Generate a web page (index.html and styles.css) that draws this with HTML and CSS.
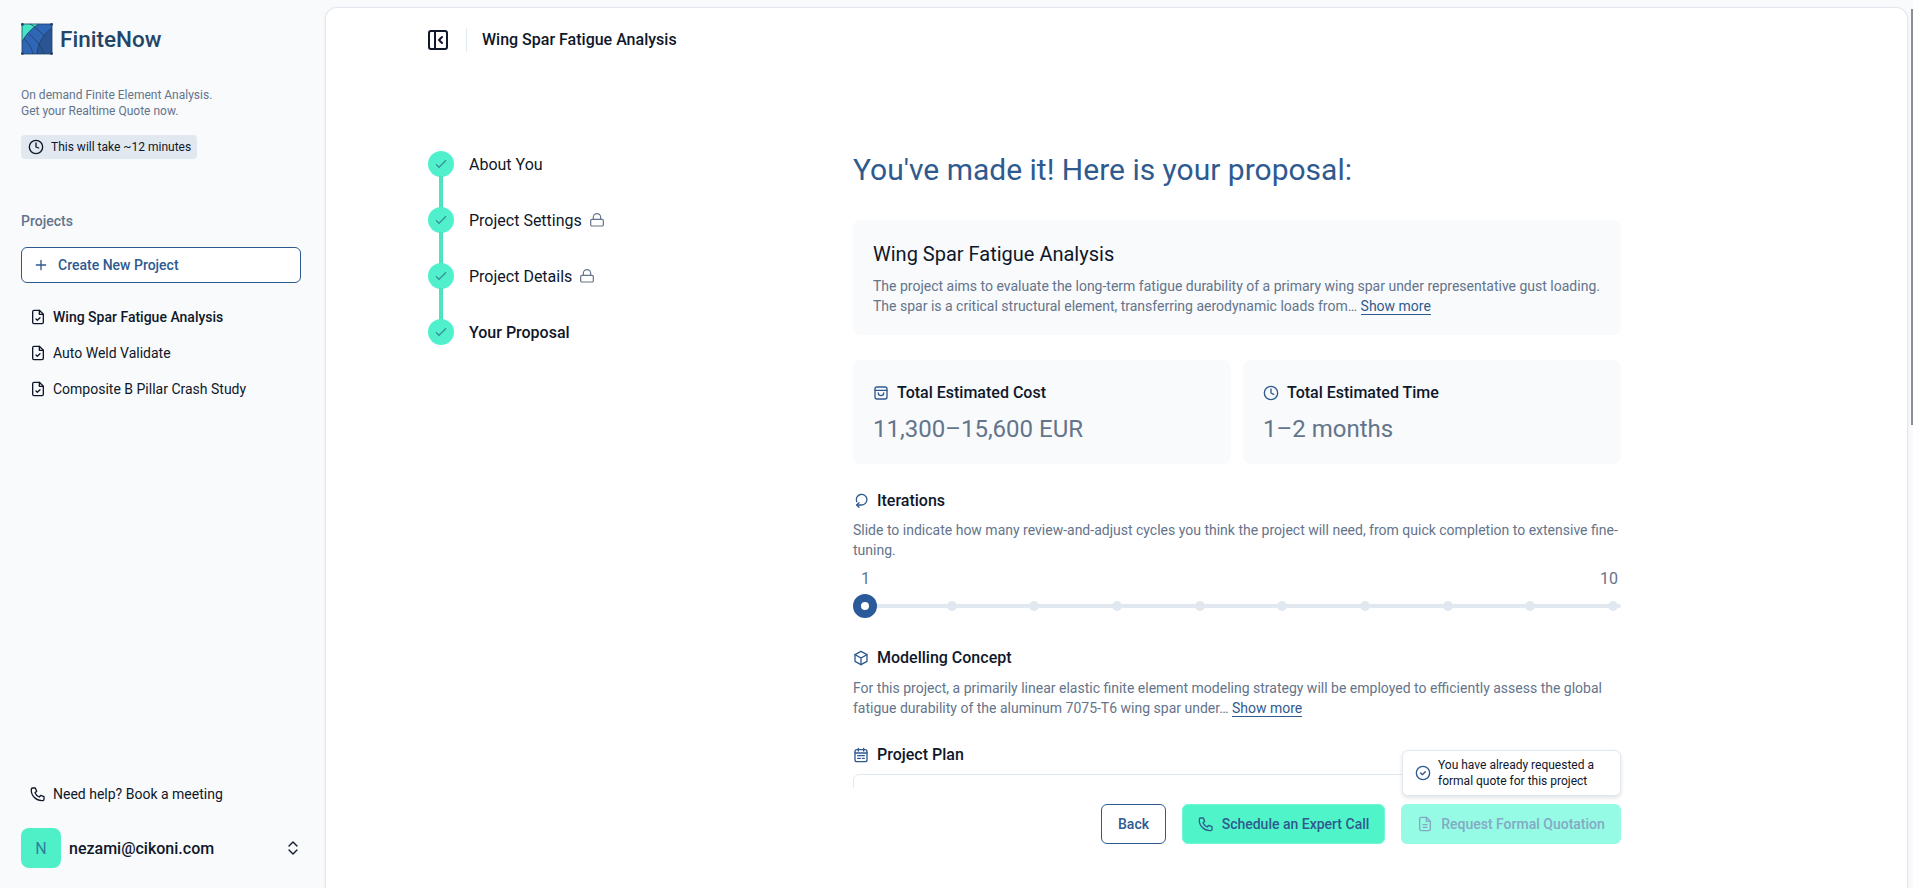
FILE: index.html
```html
<!DOCTYPE html>
<html lang="en">
<head>
    <meta charset="UTF-8">
    <meta name="viewport" content="width=device-width, initial-scale=1.0">
    <title>FiniteNow</title>
    <link rel="stylesheet" href="styles.css">
</head>
<body>
    <div class="app">
        <aside class="sidebar">
            <div class="brand">
                <svg class="logo" viewBox="0 0 32 32">
                    <rect x="1" y="1" width="30" height="30" fill="#2f66b5"/>
                    <path d="M1 1H18C11 5 5 11 1 19Z" fill="#45e6c4"/>
                    <path d="M31 5V31H16C17 20 22 11 31 5Z" fill="#2a5595"/>
                    <g fill="none" stroke="#1f3f66" stroke-width="0.8">
                        <rect x="1" y="1" width="30" height="30"/>
                        <path d="M1 19C5 11 11 5 18 1"/>
                        <path d="M16 31C17 20 22 11 31 5"/>
                        <path d="M9 1C13 3 19 9 24 13M8 11C12 14 20 22 23 31M3 16C8 20 11 26 12 31"/>
                    </g>
                    <g fill="#1f3f66">
                        <circle cx="1.400" cy="1.400" r="1.400"/><circle cx="30.600" cy="1.400" r="1.400"/>
                        <circle cx="1.400" cy="30.600" r="1.400"/><circle cx="30.600" cy="30.600" r="1.400"/>
                    </g>
                </svg>
                <span class="brand-name">FiniteNow</span>
            </div>
            <p class="tagline">On demand Finite Element Analysis.<br>Get your Realtime Quote now.</p>
            <div class="chip">
                <svg class="icon icon-16" viewBox="0 0 24 24"><circle cx="12" cy="12" r="10"/><path d="M12 6v6l4 1.500"/></svg>
                This will take ~12 minutes
            </div>
            <div class="projects-label">Projects</div>
            <button class="new-project">
                <svg class="icon icon-16" viewBox="0 0 24 24"><path d="M12 5v14M5 12h14"/></svg>
                Create New Project
            </button>
            <ul class="project-list">
                <li class="project selected">
                    <svg class="icon icon-16" viewBox="0 0 24 24"><path d="M14 2H6a2 2 0 0 0-2 2v16a2 2 0 0 0 2 2h12a2 2 0 0 0 2-2V8z"/><path d="M14 2v6h6M9 15l2 2 4-4"/></svg>
                    Wing Spar Fatigue Analysis
                </li>
                <li class="project">
                    <svg class="icon icon-16" viewBox="0 0 24 24"><path d="M14 2H6a2 2 0 0 0-2 2v16a2 2 0 0 0 2 2h12a2 2 0 0 0 2-2V8z"/><path d="M14 2v6h6M9 15l2 2 4-4"/></svg>
                    Auto Weld Validate
                </li>
                <li class="project">
                    <svg class="icon icon-16" viewBox="0 0 24 24"><path d="M14 2H6a2 2 0 0 0-2 2v16a2 2 0 0 0 2 2h12a2 2 0 0 0 2-2V8z"/><path d="M14 2v6h6M9 15l2 2 4-4"/></svg>
                    Composite B Pillar Crash Study
                </li>
            </ul>
            <div class="sidebar-bottom">
                <div class="help">
                    <svg class="icon icon-16" viewBox="0 0 24 24"><path d="M4 3h4l2 5-2.500 2a12 12 0 0 0 6.500 6.500L16 14l5 2v4a2 2 0 0 1-2 2A16 16 0 0 1 2 5a2 2 0 0 1 2-2"/></svg>
                    Need help? Book a meeting
                </div>
                <div class="user">
                    <div class="avatar">N</div>
                    <span class="email">nezami@cikoni.com</span>
                    <svg class="icon icon-16 chevrons" viewBox="0 0 24 24"><path d="M6 9l6-6 6 6M6 15l6 6 6-6"/></svg>
                </div>
            </div>
        </aside>

        <main class="panel">
            <header class="topbar">
                <svg class="icon toggle" viewBox="0 0 20 20"><rect x="1" y="1" width="18" height="18" rx="2"/><path d="M7 1v18M14 7l-3 3 3 3"/></svg>
                <span class="divider"></span>
                <span class="topbar-title">Wing Spar Fatigue Analysis</span>
            </header>

            <div class="scroller">
                <ol class="steps">
                    <li class="step">
                        <span class="step-dot"><svg class="icon icon-16" viewBox="0 0 24 24"><path d="M5 13l4 4L19 7"/></svg></span>
                        About You
                    </li>
                    <li class="step">
                        <span class="step-dot"><svg class="icon icon-16" viewBox="0 0 24 24"><path d="M5 13l4 4L19 7"/></svg></span>
                        Project Settings
                        <svg class="icon icon-16 lock" viewBox="0 0 24 24"><rect x="2.500" y="11" width="19" height="10" rx="2"/><path d="M6.500 11V8a5.500 5.500 0 0 1 11 0v3"/></svg>
                    </li>
                    <li class="step">
                        <span class="step-dot"><svg class="icon icon-16" viewBox="0 0 24 24"><path d="M5 13l4 4L19 7"/></svg></span>
                        Project Details
                        <svg class="icon icon-16 lock" viewBox="0 0 24 24"><rect x="2.500" y="11" width="19" height="10" rx="2"/><path d="M6.500 11V8a5.500 5.500 0 0 1 11 0v3"/></svg>
                    </li>
                    <li class="step current">
                        <span class="step-dot"><svg class="icon icon-16" viewBox="0 0 24 24"><path d="M5 13l4 4L19 7"/></svg></span>
                        Your Proposal
                    </li>
                </ol>

                <section class="proposal">
                    <h1>You've made it! Here is your proposal:</h1>

                    <div class="box summary">
                        <h2>Wing Spar Fatigue Analysis</h2>
                        <p class="muted">The project aims to evaluate the long-term fatigue durability of a primary wing spar under representative gust loading.<br>The spar is a critical structural element, transferring aerodynamic loads from… <a class="more">Show more</a></p>
                    </div>

                    <div class="totals">
                        <div class="box total">
                            <div class="total-title">
                                <svg class="icon icon-16 blue" viewBox="0 0 24 24"><rect x="3" y="3" width="18" height="18" rx="3"/><path d="M3 8h18M8 12a4 4 0 0 0 8 0"/></svg>
                                Total Estimated Cost
                            </div>
                            <div class="total-value">11,300–15,600 EUR</div>
                        </div>
                        <div class="box total">
                            <div class="total-title">
                                <svg class="icon icon-16 blue" viewBox="0 0 24 24"><circle cx="12" cy="12" r="10"/><path d="M12 6v6l4 2"/></svg>
                                Total Estimated Time
                            </div>
                            <div class="total-value">1–2 months</div>
                        </div>
                    </div>

                    <div class="block iterations">
                        <h3>
                            <svg class="icon icon-16 blue" viewBox="0 0 24 24"><path d="M5.500 13A8 8 0 1 1 13 18H6"/><path d="M9 14.500L5.500 18 9 21.500"/></svg>
                            Iterations
                        </h3>
                        <p class="muted">Slide to indicate how many review-and-adjust cycles you think the project will need, from quick completion to extensive fine-tuning.</p>
                        <div class="range-labels"><span>1</span><span>10</span></div>
                        <div class="slider">
                            <i></i><i></i><i></i><i></i><i></i><i></i><i></i><i></i><i></i><i></i>
                            <span class="thumb"></span>
                        </div>
                    </div>

                    <div class="block concept">
                        <h3>
                            <svg class="icon icon-16 blue" viewBox="0 0 24 24"><path d="M12 2l9 5v10l-9 5-9-5V7z"/><path d="M3 7l9 5 9-5M12 12v10"/></svg>
                            Modelling Concept
                        </h3>
                        <p class="muted">For this project, a primarily linear elastic finite element modeling strategy will be employed to efficiently assess the global<br>fatigue durability of the aluminum 7075-T6 wing spar under… <a class="more">Show more</a></p>
                    </div>

                    <div class="block plan">
                        <h3>
                            <svg class="icon icon-16 blue" viewBox="0 0 24 24"><rect x="3" y="4" width="18" height="18" rx="3"/><path d="M8 2v4M16 2v4M3 9h18M7 13h10M7 17h4M14 17h3"/></svg>
                            Project Plan
                        </h3>
                        <div class="plan-table"></div>
                    </div>
                </section>
            </div>

            <footer class="actions">
                <div class="notice">
                    <svg class="icon icon-16 blue" viewBox="0 0 24 24"><circle cx="12" cy="12" r="10"/><path d="M8.500 12l2.500 2.500 4.500-4.500"/></svg>
                    <span>You have already requested a formal quote for this project</span>
                </div>
                <button class="btn btn-back">Back</button>
                <button class="btn btn-call">
                    <svg class="icon icon-16" viewBox="0 0 24 24"><path d="M4 3h4l2 5-2.500 2a12 12 0 0 0 6.500 6.500L16 14l5 2v4a2 2 0 0 1-2 2A16 16 0 0 1 2 5a2 2 0 0 1 2-2"/></svg>
                    Schedule an Expert Call
                </button>
                <button class="btn btn-quote">
                    <svg class="icon icon-16" viewBox="0 0 24 24"><path d="M14 2H6a2 2 0 0 0-2 2v16a2 2 0 0 0 2 2h12a2 2 0 0 0 2-2V8z"/><path d="M14 2v6h6M9 13h6M9 17h6"/></svg>
                    Request Formal Quotation
                </button>
            </footer>
        </main>
    </div>
    <div class="scrollbar"></div>
</body>
</html>
```

FILE: styles.css
```css
* {
    box-sizing: border-box;
}
html, body {
    height: 100%;
}
body {
    margin: 0;
    overflow: hidden;
    background: #f8fafc;
    font-family: Roboto, sans-serif;
    font-size: 14px;
    color: #0f172a;
}
h1, h2, h3, p, ul, ol {
    margin: 0;
    padding: 0;
}
ul, ol {
    list-style: none;
}
.icon {
    fill: none;
    stroke: currentColor;
    stroke-width: 2;
    stroke-linecap: round;
    stroke-linejoin: round;
    flex: none;
}
.icon-16 {
    width: 16px;
    height: 16px;
}
.blue {
    color: #2f5a8f;
}
.app {
    display: flex;
    height: 888px;
    padding: 7px 5px 0 0;
}

/* sidebar */
.sidebar {
    width: 325px;
    flex: none;
    display: flex;
    flex-direction: column;
    padding: 16px 24px 20px 21px;
}
.brand {
    display: flex;
    align-items: center;
    gap: 7px;
    height: 32px;
}
.logo {
    width: 32px;
    height: 32px;
}
.brand-name {
    font-size: 22.500px;
    font-weight: 500;
    color: #234567;
}
.tagline {
    margin-top: 32px;
    font-size: 12px;
    line-height: 16px;
    color: #64748b;
}
.chip {
    margin-top: 16px;
    width: 176px;
    height: 24px;
    display: flex;
    align-items: center;
    gap: 7px;
    padding-left: 7px;
    border-radius: 4px;
    background: #e2e8f0;
    font-size: 12px;
    white-space: nowrap;
}
.projects-label {
    margin-top: 52px;
    font-weight: 500;
    line-height: 20px;
    color: #64748b;
}
.new-project {
    margin-top: 16px;
    height: 36px;
    display: flex;
    align-items: center;
    gap: 9px;
    padding: 0 11px;
    background: #fff;
    border: 1px solid #2f5a8f;
    border-radius: 6px;
    font: 500 14px Roboto, sans-serif;
    color: #2f5a8f;
}
.project-list {
    margin-top: 16px;
}
.project {
    height: 36px;
    display: flex;
    align-items: center;
    gap: 7px;
    padding-left: 9px;
}
.project.selected {
    font-weight: 500;
}
.sidebar-bottom {
    margin-top: auto;
}
.help {
    display: flex;
    align-items: center;
    gap: 7px;
    padding-left: 9px;
    height: 36px;
    margin-bottom: 16px;
}
.user {
    display: flex;
    align-items: center;
    gap: 8px;
    height: 40px;
}
.avatar {
    width: 40px;
    height: 40px;
    border-radius: 8px;
    background: #4ff0c8;
    color: #2f7f9f;
    font-size: 16px;
    display: flex;
    align-items: center;
    justify-content: center;
}
.email {
    font-size: 16px;
    font-weight: 500;
}
.chevrons {
    margin-left: auto;
}

/* main panel */
.panel {
    flex: 1;
    display: flex;
    flex-direction: column;
    background: #fff;
    border: 1px solid #e2e8f0;
    border-bottom: 0;
    border-radius: 12px 12px 0 0;
    overflow: hidden;
    box-shadow: 0 1px 3px rgba(15, 23, 42, 0.08);
}
.topbar {
    height: 63px;
    flex: none;
    display: flex;
    align-items: center;
    padding: 0 0 0 102px;
}
.toggle {
    width: 20px;
    height: 20px;
}
.divider {
    width: 1px;
    height: 24px;
    margin: 0 15px 0 18px;
    background: #e2e8f0;
}
.topbar-title {
    font-size: 16px;
    font-weight: 500;
}
.scroller {
    flex: 1;
    min-height: 0;
    overflow: hidden;
    display: flex;
    padding: 81px 0 0 103px;
}

/* stepper */
.steps {
    width: 424px;
    flex: none;
    margin-top: -16px;
}
.step {
    position: relative;
    height: 56px;
    display: flex;
    align-items: center;
    font-size: 16px;
    padding-left: 40px;
}
.step + .step::before {
    content: "";
    position: absolute;
    left: 10px;
    top: -16px;
    width: 4px;
    height: 32px;
    background: #4fe3c4;
}
.step-dot {
    position: absolute;
    left: -1px;
    top: 16px;
    width: 26px;
    height: 26px;
    margin-top: -1px;
    border-radius: 50%;
    background: #4ff0cb;
    color: #3c7f8f;
    display: flex;
    align-items: center;
    justify-content: center;
}
.step-dot .icon {
    stroke-width: 1.800;
}
.lock {
    margin-left: 7px;
    color: #64748b;
    stroke-width: 1.800;
}
.step.current {
    font-weight: 500;
}

/* proposal */
.proposal {
    width: 768px;
    flex: none;
}
h1 {
    font-size: 30px;
    font-weight: 400;
    line-height: 36px;
    color: #2f5a8f;
}
.box {
    background: #f8fafc;
    border-radius: 8px;
}
.summary {
    margin-top: 32px;
    height: 115px;
    padding: 20px 20px 0;
}
h2 {
    font-size: 20px;
    font-weight: 400;
    line-height: 28px;
}
.muted {
    font-size: 14px;
    line-height: 20px;
    color: #64748b;
}
.summary .muted {
    margin-top: 8px;
}
.more {
    color: #2f5a8f;
    border-bottom: 1px solid #2f5a8f;
}
.totals {
    display: grid;
    grid-template-columns: 1fr 1fr;
    gap: 12px;
    margin-top: 25px;
}
.total {
    height: 104px;
    padding: 23px 20px 0;
}
.total-title {
    display: flex;
    align-items: center;
    gap: 8px;
    font-size: 16px;
    font-weight: 500;
    line-height: 20px;
}
.total-value {
    margin-top: 10px;
    font-size: 24px;
    line-height: 32px;
    color: #64748b;
}
.block {
    margin-top: 25px;
}
h3 {
    display: flex;
    align-items: center;
    gap: 8px;
    font-size: 16px;
    font-weight: 500;
    line-height: 24px;
}
.block .muted {
    margin-top: 7px;
}
.concept .muted {
    margin-top: 8px;
}
.range-labels {
    display: flex;
    justify-content: space-between;
    font-size: 16px;
    line-height: 24px;
    color: #64748b;
    margin-top: 7px;
    padding: 0 3px 0 8px;
}
.slider {
    position: relative;
    height: 4px;
    margin-top: 13px;
    padding: 0 3px 0 11px;
    background: #e2e8f0;
    border-radius: 2px;
    display: flex;
    align-items: center;
    justify-content: space-between;
}
.slider i {
    width: 10px;
    height: 10px;
    border-radius: 50%;
    background: #e2e8f0;
}
.thumb {
    position: absolute;
    left: 0;
    top: -10px;
    width: 24px;
    height: 24px;
    border-radius: 50%;
    background: #fff;
    border: 8px solid #2b5a9b;
}
.concept {
    margin-top: 38px;
}
.plan {
    margin-top: 25px;
}
.plan-table {
    margin-top: 7px;
    height: 200px;
    border: 1px solid #e2e8f0;
    border-radius: 6px;
}

/* footer */
.actions {
    position: relative;
    height: 100px;
    flex: none;
    background: #fff;
    display: flex;
    align-items: flex-start;
    gap: 16px;
    padding: 16px 0 0 775px;
}
.btn {
    height: 40px;
    display: flex;
    align-items: center;
    justify-content: center;
    gap: 8px;
    border-radius: 6px;
    font: 500 14px Roboto, sans-serif;
    color: #2f5a8f;
}
.btn-back {
    width: 65px;
    background: #fff;
    border: 1px solid #2f5a8f;
}
.btn-call {
    width: 203px;
    background: #4ff5c8;
    border: 1px solid #6ff7d3;
}
.btn-quote {
    width: 220px;
    background: #95fbe4;
    border: 0;
    color: #84a9c4;
}
.notice {
    position: absolute;
    left: 1076px;
    top: -38px;
    width: 219px;
    height: 46px;
    display: flex;
    align-items: center;
    gap: 7px;
    padding: 0 12px;
    background: #fff;
    border: 1px solid #e2e8f0;
    border-radius: 6px;
    box-shadow: 0 2px 4px rgba(15, 23, 42, 0.12);
    font-size: 12px;
    line-height: 16px;
}
.scrollbar {
    position: absolute;
    right: 0;
    top: 9px;
    width: 2px;
    height: 416px;
    background: #8a8f96;
}
```
